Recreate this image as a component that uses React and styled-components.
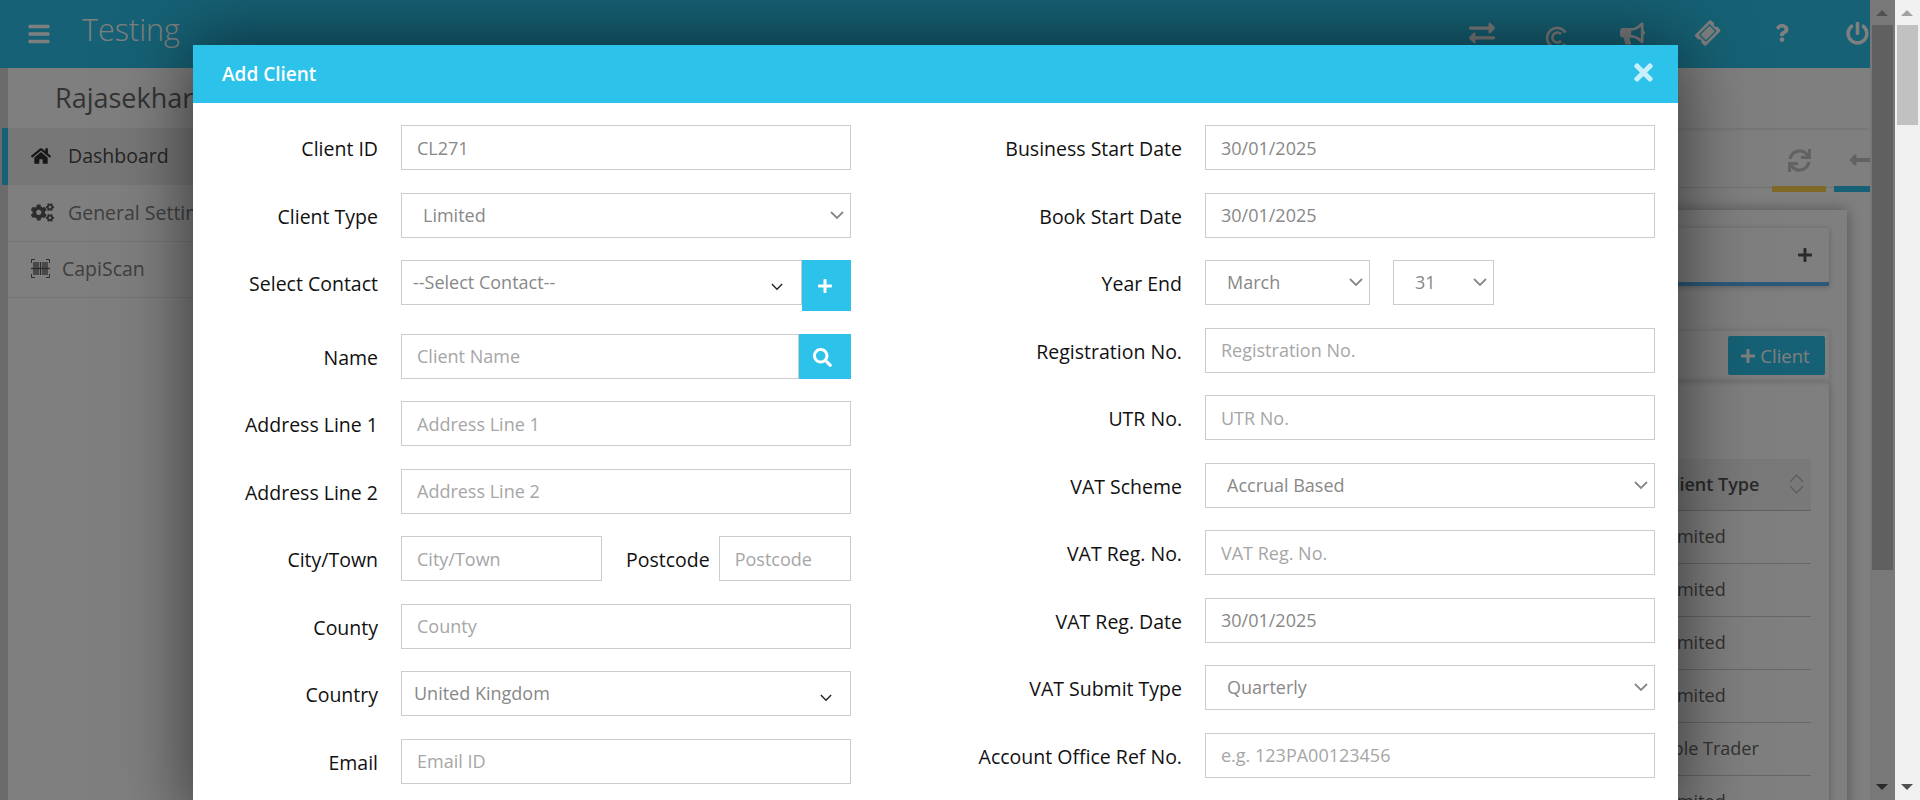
import styled, { createGlobalStyle } from "styled-components";
import {
  FaBars,
  FaBullhorn,
  FaCogs,
  FaExchangeAlt,
  FaHome,
  FaLongArrowAltLeft,
  FaPlus,
  FaPowerOff,
  FaQuestion,
  FaSearch,
  FaSync,
  FaTicketAlt,
  FaTimes,
} from "react-icons/fa";

const GlobalStyle = createGlobalStyle`
  html, body {
    margin: 0;
    height: 800px;
    overflow: hidden;
    font-family: "Open Sans", "Liberation Sans", sans-serif;
  }
  * { box-sizing: border-box; }
`;

const Page = styled.div`
  position: relative;
  display: flex;
  width: 1920px;
  height: 800px;
  overflow: hidden;
  background: #fff;
`;

const Shell = styled.div`
  flex: 1;
  min-width: 0;
  display: flex;
  flex-direction: column;
`;

const Topbar = styled.header`
  flex: 0 0 68px;
  display: flex;
  align-items: center;
  padding-left: 27px;
  background: #2dc2ea;
  color: #fff;
`;

const Title = styled.div`
  margin-left: 31px;
  margin-top: -10px;
  font-size: 30.5px;
  font-weight: 300;
`;

const TopIcons = styled.nav`
  margin-left: auto;
  display: flex;
  align-items: center;
  gap: 49px;
`;

const TopIcon = styled.span`
  width: 26px;
  height: 30px;
  margin-top: ${(p) => p.$shift ?? -2}px;
  display: flex;
  align-items: center;
  justify-content: center;
  transform: ${(p) => (p.$tilt ? "rotate(-45deg)" : "none")};
`;

const Body = styled.div`
  flex: 1;
  min-height: 0;
  display: flex;
`;

const Sidebar = styled.aside`
  flex: 0 0 250px;
  border-left: 8px solid #d6d6d6;
  background: #fff;
`;

const Profile = styled.div`
  height: 60px;
  padding: 11px 0 0 47px;
  font-size: 27px;
  color: #666;
`;

const NavItem = styled.div`
  position: relative;
  height: ${(p) => p.$height || 57}px;
  display: flex;
  align-items: center;
  gap: ${(p) => p.$gap || 17}px;
  padding: 0 0 2px ${(p) => p.$indent || 23}px;
  font-size: 19.5px;
  white-space: nowrap;
  color: ${(p) => (p.$active ? "#4a4a4a" : "#808080")};
  background: ${(p) => (p.$active ? "#eee" : "transparent")};
  border-bottom: ${(p) => (p.$active ? "0" : "1px solid #eaeaea")};
  svg { color: ${(p) => (p.$active ? "#2e2e2e" : "#5a5a5a")}; flex: none; }

  &::before {
    content: "";
    display: ${(p) => (p.$active ? "block" : "none")};
    position: absolute;
    left: -6px;
    top: 0;
    bottom: 0;
    width: 6px;
    background: #2dc2ea;
  }
`;

const Main = styled.main`
  flex: 1;
  min-width: 0;
  overflow: hidden;
  background: #fff;
`;

const MainTitle = styled.div`
  height: 60px;
  box-shadow: 0 1px 4px rgba(0, 0, 0, 0.12);
  position: relative;
`;

const Toolbar = styled.div`
  height: 60px;
  display: flex;
  justify-content: flex-end;
  gap: 8px;
  margin-right: -18px;
  border-bottom: 1px solid #e4e4e4;
`;

const ToolTab = styled.div`
  width: 54px;
  height: 64px;
  flex: none;
  display: flex;
  align-items: center;
  justify-content: center;
  padding-top: 6px;
  border-bottom: 6px solid ${(p) => p.$color};
  color: #c4c4c4;
`;

const Sheet = styled.section`
  margin: 22px 23px 0 20px;
  padding: 18px;
  padding-right: 0;
  height: 700px;
  background: #fff;
  box-shadow: 0 0 14px rgba(0, 0, 0, 0.35);
`;

const Accordion = styled.div`
  height: 58px;
  margin-right: 18px;
  display: flex;
  align-items: center;
  justify-content: flex-end;
  padding-right: 16px;
  border-bottom: 4px solid #58b2f5;
  box-shadow: 0 1px 6px rgba(0, 0, 0, 0.25);
  color: #555;
`;

const ListBar = styled.div`
  margin: 45px 18px 0 0;
  height: 51px;
  display: flex;
  justify-content: flex-end;
  padding: 5px 4px 0 0;
  box-shadow: 0 0 6px rgba(0, 0, 0, 0.15);
`;

const AddButton = styled.button`
  width: 97px;
  height: 39px;
  display: flex;
  align-items: center;
  justify-content: center;
  gap: 4px;
  padding: 0 3px 0 0;
  border: 0;
  border-radius: 2px;
  background: #2dc2ea;
  color: #fff;
  font: 400 18.5px "Open Sans", sans-serif;
`;

const ListCard = styled.div`
  margin-right: 18px;
  padding: 77px 18px 0 0;
  border-radius: 4px;
  box-shadow: 0 1px 8px rgba(0, 0, 0, 0.3);
`;

const TableRow = styled.div`
  height: ${(p) => (p.$head ? 52 : 53)}px;
  display: grid;
  grid-template-columns: 1fr 148px;
  align-items: center;
  padding-bottom: 2px;
  font-size: 18px;
  font-weight: ${(p) => (p.$head ? 600 : 400)};
  color: ${(p) => (p.$head ? "#555" : "#666")};
  background: ${(p) => (p.$head ? "#f3f3f3" : "transparent")};
  border-bottom: 1px solid ${(p) => (p.$head ? "#c4c4c4" : "#cfcfcf")};
`;

const SortCell = styled.div`
  display: flex;
  align-items: center;
  justify-content: space-between;
  padding-right: 7px;
  white-space: nowrap;
`;

const Scrollbar = styled.div`
  position: relative;
  flex: 0 0 25px;
  height: 800px;
  background: #f1f1f1;

  &::before,
  &::after {
    content: "";
    position: absolute;
    left: 6px;
    border-left: 6px solid transparent;
    border-right: 6px solid transparent;
  }
  &::before {
    top: 10px;
    border-bottom: 6px solid #a3a3a3;
  }
  &::after {
    bottom: 10px;
    border-top: 6px solid #505050;
  }
`;

const Thumb = styled.div`
  margin: 25px 2px 0;
  height: ${(p) => p.$height}px;
  background: #c1c1c1;
`;

const Backdrop = styled.div`
  position: absolute;
  inset: 0 25px 0 0;
  overflow: hidden;
  background: rgba(0, 0, 0, 0.5);
`;

const Modal = styled.div`
  width: 1485px;
  margin: 45px 0 0 193px;
  background: #fff;
  box-shadow: 0 0 70px rgba(0, 0, 0, 0.6);
`;

const ModalHeader = styled.div`
  height: 58px;
  display: flex;
  align-items: center;
  justify-content: space-between;
  padding: 0 21px 0 29px;
  background: #2dc2ea;
  color: #fff;
  font-size: 19px;
  font-weight: 600;
`;

const CloseButton = styled.span`
  display: flex;
  margin-top: -3px;
  color: #c8f0fb;
`;

const ModalBody = styled.div`
  display: grid;
  grid-template-columns: 658px 804px;
  padding: 22px 23px 40px 0;
`;

const FormColumn = styled.div`
  display: grid;
  grid-template-columns: ${(p) => p.$labelWidth}px 450px;
  column-gap: 23px;
  row-gap: 22.5px;
  align-items: start;
  align-content: start;
`;

const Label = styled.label`
  height: 45px;
  line-height: 47px;
  text-align: right;
  white-space: nowrap;
  font-size: 19.5px;
  color: #111;
`;

const Input = styled.input`
  display: block;
  width: ${(p) => (p.$width ? `${p.$width}px` : "100%")};
  flex: ${(p) => (p.$width ? "none" : "1")};
  min-width: 0;
  height: 45px;
  padding: 0 15px;
  border: 1px solid #ccc;
  border-radius: 0;
  outline: 0;
  background: #fff;
  color: #888;
  font: 400 18px "Open Sans", sans-serif;

  &::placeholder {
    color: #a6a6a6;
    opacity: 1;
  }
`;

const SelectWrap = styled.div`
  position: relative;
  flex: ${(p) => (p.$width ? "none" : "1")};
  width: ${(p) => (p.$width ? `${p.$width}px` : "100%")};
  min-width: 0;
`;

const SelectField = styled.select`
  display: block;
  width: 100%;
  height: 45px;
  padding: 0 0 1px ${(p) => p.$indent}px;
  border: 1px solid #ccc;
  border-radius: 0;
  outline: 0;
  appearance: none;
  background: #fff;
  color: #888;
  font: 400 18px "Open Sans", sans-serif;
`;

const Chevron = styled.svg`
  position: absolute;
  pointer-events: none;
  right: ${(p) => (p.$dark ? 19 : 7)}px;
  top: ${(p) => (p.$dark ? 23 : 18)}px;
  width: ${(p) => (p.$dark ? 12 : 14)}px;
  height: ${(p) => (p.$dark ? 8 : 9)}px;
  fill: none;
  stroke: ${(p) => (p.$dark ? "#222" : "#888")};
  stroke-width: ${(p) => (p.$dark ? 1.6 : 1.8)};
`;

const Group = styled.div`
  display: flex;
  align-items: flex-start;
`;

const InlineLabel = styled(Label)`
  margin: 0 9px 0 24px;
`;

const GroupButton = styled.button`
  flex: none;
  width: ${(p) => p.$width}px;
  height: ${(p) => p.$height}px;
  display: flex;
  align-items: center;
  justify-content: center;
  padding: ${(p) => p.$pad || "0"};
  border: 0;
  background: #2dc2ea;
  color: #fff;
`;

const YearGroup = styled(Group)`
  gap: 23px;
`;

const Select = ({ value, indent = 21, dark, width }) => (
  <SelectWrap $width={width}>
    <SelectField $indent={indent} defaultValue={value}>
      <option>{value}</option>
    </SelectField>
    <Chevron $dark={dark} viewBox="0 0 14 9" preserveAspectRatio="none">
      <path d="M1 1l6 6 6-6" />
    </Chevron>
  </SelectWrap>
);

const RingIcon = () => (
  <svg width="22" height="22" viewBox="0 0 22 22" fill="none" stroke="currentColor" strokeWidth="2.6">
    <path d="M19.5 6.5A10 10 0 1 0 19 18" />
    <path d="M15 8a5 5 0 1 0 0 7" />
  </svg>
);

const ScanIcon = () => (
  <svg width="19" height="19" viewBox="0 0 19 19" fill="none" stroke="currentColor">
    <path d="M.5 4V.5H4M15 .5h3.5V4M.5 15v3.5H4M15 18.5h3.5V15" strokeWidth="1" />
    <path d="M3 3v13M5 3v13M7 3v13M9.5 3v13M12 3v13M14 3v13M16 3v13" strokeWidth="1.3" />
    <path d="M0 9.5h19" strokeWidth="1.4" />
  </svg>
);

const SortIcon = () => (
  <svg width="15" height="20" viewBox="0 0 15 20" fill="none" stroke="#b8b8b8" strokeWidth="1.2">
    <path d="M1 8l6.5-7L14 8M1 12l6.5 7L14 12" />
  </svg>
);

const clientTypes = ["Limited", "Limited", "Limited", "Limited", "Sole Trader", "Limited"];

export default function App() {
  return (
    <Page>
      <GlobalStyle />
      <Shell>
        <Topbar>
          <FaBars size={24} />
          <Title>Testing</Title>
          <TopIcons>
            <TopIcon><FaExchangeAlt size={26} /></TopIcon>
            <TopIcon $shift={6}><RingIcon /></TopIcon>
            <TopIcon><FaBullhorn size={25} /></TopIcon>
            <TopIcon $tilt><FaTicketAlt size={23} /></TopIcon>
            <TopIcon><FaQuestion size={18} /></TopIcon>
            <TopIcon><FaPowerOff size={23} /></TopIcon>
          </TopIcons>
        </Topbar>
        <Body>
          <Sidebar>
            <Profile>Rajasekhar</Profile>
            <NavItem $active>
              <FaHome size={20} />
              Dashboard
            </NavItem>
            <NavItem $gap={14}>
              <FaCogs size={23} />
              General Settings
            </NavItem>
            <NavItem $gap={12} $height={56}>
              <ScanIcon />
              CapiScan
            </NavItem>
          </Sidebar>
          <Main>
            <MainTitle />
            <Toolbar>
              <ToolTab $color="#ffd24f"><FaSync size={23} /></ToolTab>
              <ToolTab $color="#2dc2ea"><FaLongArrowAltLeft size={26} /></ToolTab>
            </Toolbar>
            <Sheet>
              <Accordion><FaPlus size={16} /></Accordion>
              <ListBar>
                <AddButton><FaPlus size={16} />Client</AddButton>
              </ListBar>
              <ListCard>
                <TableRow $head>
                  <span />
                  <SortCell>Client Type<SortIcon /></SortCell>
                </TableRow>
                {clientTypes.map((type, i) => (
                  <TableRow key={i}>
                    <span />
                    <span>{type}</span>
                  </TableRow>
                ))}
              </ListCard>
            </Sheet>
          </Main>
        </Body>
      </Shell>
      <Scrollbar><Thumb $height={545} /></Scrollbar>
      <Scrollbar><Thumb $height={100} /></Scrollbar>
      <Backdrop>
        <Modal>
          <ModalHeader>
            Add Client
            <CloseButton><FaTimes size={27} /></CloseButton>
          </ModalHeader>
          <ModalBody>
            <FormColumn $labelWidth={185}>
              <Label>Client ID</Label>
              <Input defaultValue="CL271" />
              <Label>Client Type</Label>
              <Select value="Limited" />
              <Label>Select Contact</Label>
              <Group>
                <Select value="--Select Contact--" indent={11} dark />
                <GroupButton $width={49} $height={51} $pad="0 4px 0 0"><FaPlus size={16} /></GroupButton>
              </Group>
              <Label>Name</Label>
              <Group>
                <Input placeholder="Client Name" />
                <GroupButton $width={52} $height={45} $pad="3px 5px 0 0"><FaSearch size={19} /></GroupButton>
              </Group>
              <Label>Address Line 1</Label>
              <Input placeholder="Address Line 1" />
              <Label>Address Line 2</Label>
              <Input placeholder="Address Line 2" />
              <Label>City/Town</Label>
              <Group>
                <Input placeholder="City/Town" $width={201} />
                <InlineLabel>Postcode</InlineLabel>
                <Input placeholder="Postcode" />
              </Group>
              <Label>County</Label>
              <Input placeholder="County" />
              <Label>Country</Label>
              <Select value="United Kingdom" indent={12} dark />
              <Label>Email</Label>
              <Input placeholder="Email ID" />
            </FormColumn>
            <FormColumn $labelWidth={331}>
              <Label>Business Start Date</Label>
              <Input defaultValue="30/01/2025" />
              <Label>Book Start Date</Label>
              <Input defaultValue="30/01/2025" />
              <Label>Year End</Label>
              <YearGroup>
                <Select value="March" width={165} />
                <Select value="31" width={101} />
              </YearGroup>
              <Label>Registration No.</Label>
              <Input placeholder="Registration No." />
              <Label>UTR No.</Label>
              <Input placeholder="UTR No." />
              <Label>VAT Scheme</Label>
              <Select value="Accrual Based" />
              <Label>VAT Reg. No.</Label>
              <Input placeholder="VAT Reg. No." />
              <Label>VAT Reg. Date</Label>
              <Input defaultValue="30/01/2025" />
              <Label>VAT Submit Type</Label>
              <Select value="Quarterly" />
              <Label>Account Office Ref No.</Label>
              <Input placeholder="e.g. 123PA00123456" />
            </FormColumn>
          </ModalBody>
        </Modal>
      </Backdrop>
    </Page>
  );
}
